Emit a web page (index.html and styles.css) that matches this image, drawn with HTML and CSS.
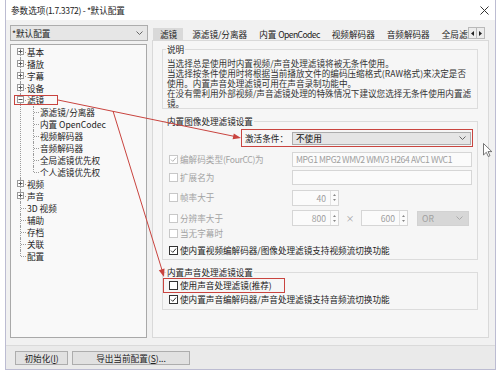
FILE: index.html
```html
<!DOCTYPE html>
<html lang="zh-CN">
<head>
<meta charset="utf-8">
<title>参数选项</title>
<link rel="stylesheet" href="styles.css">
</head>
<body>
<div class="window">
  <div class="titlebar">
    <span class="title">参数选项<span class="latin">(1.7.3372) - *</span>默认配置</span>
    <svg class="close" width="9" height="9" viewBox="0 0 9 9"><path d="M0.5 0.5L8.5 8.5M8.5 0.5L0.5 8.5" stroke="#333" stroke-width="1"/></svg>
  </div>
  <div class="client">
    <div class="main">
      <div class="sidebar">
        <div class="combo profile">
          <span>*默认配置</span>
          <svg class="chev" width="7" height="4" viewBox="0 0 7 4"><path d="M0.5 0.5L3.5 3.5L6.5 0.5" fill="none" stroke="#666"/></svg>
        </div>
        <div class="tree">
          <ul class="tree-list root">
            <li><div class="row"><svg class="exp" width="7" height="7" viewBox="0 0 7 7"><rect x="0.5" y="0.5" width="6" height="6" fill="#fff" stroke="#9a9a9a"/><path d="M1.5 3.5h4M3.5 1.5v4" stroke="#555"/></svg>基本</div></li>
            <li><div class="row"><svg class="exp" width="7" height="7" viewBox="0 0 7 7"><rect x="0.5" y="0.5" width="6" height="6" fill="#fff" stroke="#9a9a9a"/><path d="M1.5 3.5h4M3.5 1.5v4" stroke="#555"/></svg>播放</div></li>
            <li><div class="row"><svg class="exp" width="7" height="7" viewBox="0 0 7 7"><rect x="0.5" y="0.5" width="6" height="6" fill="#fff" stroke="#9a9a9a"/><path d="M1.5 3.5h4M3.5 1.5v4" stroke="#555"/></svg>字幕</div></li>
            <li><div class="row"><svg class="exp" width="7" height="7" viewBox="0 0 7 7"><rect x="0.5" y="0.5" width="6" height="6" fill="#fff" stroke="#9a9a9a"/><path d="M1.5 3.5h4M3.5 1.5v4" stroke="#555"/></svg>设备</div></li>
            <li><div class="row"><svg class="exp" width="7" height="7" viewBox="0 0 7 7"><rect x="0.5" y="0.5" width="6" height="6" fill="#fff" stroke="#9a9a9a"/><path d="M1.5 3.5h4" stroke="#555"/></svg>滤镜</div>
              <ul class="tree-list sub">
                <li><div class="row">源滤镜/分离器</div></li>
                <li><div class="row">内置 OpenCodec</div></li>
                <li><div class="row">视频解码器</div></li>
                <li><div class="row">音频解码器</div></li>
                <li><div class="row">全局滤镜优先权</div></li>
                <li><div class="row">个人滤镜优先权</div></li>
              </ul>
            </li>
            <li><div class="row"><svg class="exp" width="7" height="7" viewBox="0 0 7 7"><rect x="0.5" y="0.5" width="6" height="6" fill="#fff" stroke="#9a9a9a"/><path d="M1.5 3.5h4M3.5 1.5v4" stroke="#555"/></svg>视频</div></li>
            <li><div class="row"><svg class="exp" width="7" height="7" viewBox="0 0 7 7"><rect x="0.5" y="0.5" width="6" height="6" fill="#fff" stroke="#9a9a9a"/><path d="M1.5 3.5h4M3.5 1.5v4" stroke="#555"/></svg>声音</div></li>
            <li><div class="row">3D 视频</div></li>
            <li><div class="row">辅助</div></li>
            <li><div class="row">存档</div></li>
            <li><div class="row">关联</div></li>
            <li><div class="row">配置</div></li>
          </ul>
        </div>
      </div>
      <div class="tabs-area">
        <div class="tabstrip">
          <div class="tabs">
            <span class="tab active">滤镜</span>
            <span class="tab">源滤镜/分离器</span>
            <span class="tab">内置 <span class="latin">OpenCodec</span></span>
            <span class="tab">视频解码器</span>
            <span class="tab">音频解码器</span>
            <span class="tab">全局滤镜优先权</span>
          </div>
          <div class="tab-arrows">
            <span class="tab-arrow"><svg width="3" height="5" viewBox="0 0 3 5"><path d="M3 0L0 2.5L3 5Z" fill="#222"/></svg></span>
            <span class="tab-arrow"><svg width="3" height="5" viewBox="0 0 3 5"><path d="M0 0L3 2.5L0 5Z" fill="#222"/></svg></span>
          </div>
        </div>
        <div class="panel">
          <fieldset class="group">
            <legend>说明</legend>
            <div class="desc">
              <div>当选择总是使用时内置视频/声音处理滤镜将被无条件使用。</div>
              <div>当选择按条件使用时将根据当前播放文件的编码压缩格式(RAW格式)来决定是否</div>
              <div>使用。内置声音处理滤镜可用在声音录制功能中。</div>
              <div>在没有需利用外部视频/声音滤镜处理的特殊情况下建议您选择无条件使用内置滤</div>
              <div>镜。</div>
            </div>
          </fieldset>

          <fieldset class="group video">
            <legend>内置图像处理滤镜设置</legend>
            <div class="opt-row r1">
              <div class="cond-box">
                <span class="cond-label">激活条件：</span>
                <div class="combo cond-select">
                  <span>不使用</span>
                  <svg class="chev" width="7" height="4" viewBox="0 0 7 4"><path d="M0.5 0.5L3.5 3.5L6.5 0.5" fill="none" stroke="#666"/></svg>
                </div>
              </div>
            </div>
            <div class="opt-row r2">
              <div class="lab disabled"><span class="cb dis"><svg width="7" height="7" viewBox="0 0 7 7"><path d="M1 3.6L2.8 5.4L6 1.6" fill="none" stroke="#b5b5b5" stroke-width="1"/></svg></span><span class="lab-text">编解码类型<span class="latin">(FourCC)</span>为</span></div>
              <div class="field"><span class="latin">MPG1 MPG2 WMV2 WMV3 H264 AVC1 WVC1</span></div>
            </div>
            <div class="opt-row r3">
              <div class="lab disabled"><span class="cb dis"></span><span class="lab-text">扩展名为</span></div>
              <div class="field"></div>
            </div>
            <div class="opt-row r4">
              <div class="lab disabled"><span class="cb dis"></span><span class="lab-text">帧率大于</span></div>
              <div class="spin">
                <span class="spin-val">40</span>
                <span class="spin-btns">
                  <svg width="3" height="2" viewBox="0 0 3 2"><path d="M0 2L1.5 0L3 2Z" fill="#888"/></svg>
                  <svg width="3" height="2" viewBox="0 0 3 2"><path d="M0 0L1.5 2L3 0Z" fill="#888"/></svg>
                </span>
              </div>
            </div>
            <div class="opt-row r5">
              <div class="lab disabled"><span class="cb dis"></span><span class="lab-text">分辨率大于</span></div>
              <div class="spin">
                <span class="spin-val">800</span>
                <span class="spin-btns">
                  <svg width="3" height="2" viewBox="0 0 3 2"><path d="M0 2L1.5 0L3 2Z" fill="#888"/></svg>
                  <svg width="3" height="2" viewBox="0 0 3 2"><path d="M0 0L1.5 2L3 0Z" fill="#888"/></svg>
                </span>
              </div>
              <span class="times">×</span>
              <div class="spin">
                <span class="spin-val">600</span>
                <span class="spin-btns">
                  <svg width="3" height="2" viewBox="0 0 3 2"><path d="M0 2L1.5 0L3 2Z" fill="#888"/></svg>
                  <svg width="3" height="2" viewBox="0 0 3 2"><path d="M0 0L1.5 2L3 0Z" fill="#888"/></svg>
                </span>
              </div>
              <div class="combo or-select">
                <span>OR</span>
                <svg class="chev" width="7" height="4" viewBox="0 0 7 4"><path d="M0.5 0.5L3.5 3.5L6.5 0.5" fill="none" stroke="#aaa"/></svg>
              </div>
            </div>
            <div class="opt-row r6">
              <div class="lab disabled"><span class="cb dis"></span><span class="lab-text">当无字幕时</span></div>
            </div>
            <div class="opt-row r7">
              <div class="lab wide"><span class="cb"><svg width="7" height="7" viewBox="0 0 7 7"><path d="M1 3.6L2.8 5.4L6 1.6" fill="none" stroke="#333" stroke-width="1"/></svg></span><span class="lab-text">使内置视频编解码器/图像处理滤镜支持视频流切换功能</span></div>
            </div>
          </fieldset>

          <fieldset class="group audio">
            <legend>内置声音处理滤镜设置</legend>
            <div class="opt-row a1">
              <div class="audio-box"><span class="cb"></span><span class="lab-text">使用声音处理滤镜(推荐)</span></div>
            </div>
            <div class="opt-row a2">
              <div class="lab wide"><span class="cb"><svg width="7" height="7" viewBox="0 0 7 7"><path d="M1 3.6L2.8 5.4L6 1.6" fill="none" stroke="#333" stroke-width="1"/></svg></span><span class="lab-text">使内置声音编解码器/声音处理滤镜支持音频流切换功能</span></div>
            </div>
          </fieldset>
        </div>
      </div>
    </div>
    <div class="footer">
      <span class="btn btn-init">初始化(<u>I</u>)</span>
      <span class="btn btn-export">导出当前配置(<u>S</u>)...</span>
    </div>
  </div>
</div>

<svg class="annot" width="500" height="375" viewBox="0 0 500 375">
  <rect x="14.5" y="95.5" width="43" height="9" fill="none" stroke="#c9443f" stroke-width="1"/>
  <line x1="58" y1="100" x2="234" y2="136.3" stroke="#c9443f" stroke-width="1"/>
  <polygon points="241,138 232.6,139.3 233.8,133.5" fill="#c9443f"/>
  <line x1="113" y1="111" x2="162" y2="270" stroke="#c9443f" stroke-width="1"/>
  <polygon points="164,277 158.8,270.3 164.5,268.5" fill="#c9443f"/>
  <path d="M483.5 143.5L483.5 155L486.3 152.3L488.3 156.5L490 155.7L488 151.6L491.8 151.6Z" fill="#fff" stroke="#555" stroke-width="0.8" stroke-linejoin="round"/>
</svg>
</body>
</html>
```

FILE: styles.css
```css
body {
  margin: 0;
  background: #ffffff;
  font-family: "Noto Sans CJK SC", "Microsoft YaHei", sans-serif;
  font-size: 8.6px;
  line-height: 11px;
  color: #222;
  position: relative;
  width: 500px;
  height: 375px;
  overflow: hidden;
}

.latin { letter-spacing: -0.35px; }

.window {
  margin-left: 5px;
  width: 489px;
  height: 369px;
  border: 1px solid #bcbcd2;
  border-top: none;
  display: flex;
  flex-direction: column;
  background: #f1f1f1;
}

.titlebar {
  height: 20px;
  flex-shrink: 0;
  background: #ffffff;
  display: flex;
  align-items: center;
  justify-content: space-between;
  padding: 0 6px 0 5px;
}
.title { color: #222; }
.close { display: block; }

.client {
  flex: 1;
  display: flex;
  flex-direction: column;
}

.main {
  height: 325px;
  box-sizing: border-box;
  display: flex;
  padding: 5px 0 0 4px;
}

.sidebar {
  width: 138px;
  display: flex;
  flex-direction: column;
}

.combo {
  box-sizing: border-box;
  display: flex;
  align-items: center;
  justify-content: space-between;
  white-space: nowrap;
}
.chev { display: block; }

.profile {
  height: 16px;
  border: 1px solid #adadad;
  background: #e6e6e6;
  padding: 0 4px 0 1px;
}

.tree {
  margin-top: 3px;
  width: 137px;
  height: 294px;
  box-sizing: border-box;
  border: 1px solid #a9a9a9;
  background: #f9f9f9;
  padding-top: 1px;
  color: #222;
}

.tree-list {
  list-style: none;
  margin: 0;
  padding: 0;
}
.tree-list.root { margin-left: 5px; }
.tree-list.sub { margin-left: 13px; }

.tree-list li { position: relative; }
.tree-list li::before {
  content: "";
  position: absolute;
  left: 4px;
  top: 0;
  bottom: 0;
  border-left: 1px dotted #9c9c9c;
}
.tree-list li:last-child::before { bottom: auto; height: 6px; }
.tree-list.root > li:first-child::before { top: 6px; }

.row {
  position: relative;
  height: 12px;
  display: flex;
  align-items: center;
  padding-left: 11px;
  white-space: nowrap;
}
.row::after {
  content: "";
  position: absolute;
  left: 5px;
  top: 6px;
  width: 5px;
  border-top: 1px dotted #9c9c9c;
}
.exp {
  position: absolute;
  left: 1px;
  top: 2px;
  z-index: 1;
  display: block;
}

.tabs-area {
  margin-left: 4px;
  width: 337px;
  display: flex;
  flex-direction: column;
}

.tabstrip {
  height: 15px;
  display: flex;
  align-items: flex-end;
}
.tabs {
  flex: 1;
  min-width: 0;
  display: flex;
  overflow: hidden;
  padding-left: 1px;
}
.tab {
  flex-shrink: 0;
  height: 12px;
  line-height: 12px;
  padding: 0 6px;
  white-space: nowrap;
  color: #222;
}
.tab.active { background: #d9d9d9; padding: 0 6px 0 7px; margin-right: 3px; }
.tab .latin { letter-spacing: -0.6px; }

.tab-arrows {
  align-self: flex-start;
  margin-top: 2px;
  margin-right: 4px;
  display: flex;
}
.tab-arrow {
  width: 9px;
  height: 12px;
  box-sizing: border-box;
  border: 1px solid #b9b9b9;
  background: #ececec;
  display: flex;
  align-items: center;
  justify-content: center;
}
.tab-arrow + .tab-arrow { margin-left: -1px; }
.tab-arrow svg { display: block; }

.panel {
  height: 298px;
  box-sizing: border-box;
  border: 1px solid #d9d9d9;
  background: #f6f6f6;
  padding: 3px 10px 0 9px;
}

.group {
  margin: 0;
  min-width: 0;
  border: 1px solid #dcdcdc;
  padding: 0 4px;
}
.group legend {
  padding: 0 1px;
  margin-left: -1px;
  line-height: 11px;
  color: #222;
}
.group.video { margin-top: 7px; padding-bottom: 3px; }
.group.audio { margin-top: 7px; padding-bottom: 4px; }

.desc {
  padding-top: 3px;
  line-height: 10px;
  color: #333;
  white-space: nowrap;
}

.opt-row {
  display: flex;
  align-items: center;
  white-space: nowrap;
}
.r1 { height: 18px; margin-top: 2px; }
.r2 { height: 16px; margin-top: 4px; }
.r3 { height: 16px; margin-top: 2px; }
.r4 { height: 17px; margin-top: 4px; }
.r5 { height: 16px; margin-top: 4px; }
.r6 { height: 12px; margin-top: 1px; }
.r7 { height: 12px; margin-top: 5px; }
.a1 { height: 15px; }
.a2 { height: 12px; }

.cond-box {
  margin-left: 74px;
  width: 233px;
  height: 18px;
  box-sizing: border-box;
  border: 1px solid #c9443f;
  display: flex;
  align-items: center;
  padding-left: 3px;
}
.cond-label { width: 43px; flex-shrink: 0; color: #222; }
.cond-select {
  margin-left: 4px;
  width: 179px;
  height: 13px;
  border: 1px solid #adadad;
  background: #e5e5e5;
  padding: 0 4px 0 3px;
  color: #111;
}

.lab {
  width: 125px;
  flex-shrink: 0;
  display: flex;
  align-items: center;
}
.lab.wide { width: auto; }
.lab.disabled { color: #a3a3a3; }

.cb {
  width: 9px;
  height: 9px;
  box-sizing: border-box;
  border: 1px solid #333;
  background: #fff;
  margin-left: 2px;
  flex-shrink: 0;
  display: flex;
  align-items: center;
  justify-content: center;
}
.cb svg { display: block; }
.cb.dis { border-color: #c8c8c8; }
.lab-text { margin-left: 2px; }

.field {
  width: 180px;
  height: 15px;
  box-sizing: border-box;
  border: 1px solid #d6d6d6;
  background: #fbfbfb;
  color: #9e9e9e;
  padding-left: 3px;
  display: flex;
  align-items: center;
}
.field .latin { letter-spacing: -0.4px; }

.spin {
  width: 47px;
  height: 16px;
  box-sizing: border-box;
  border: 1px solid #d6d6d6;
  background: #fbfbfb;
  display: flex;
}
.spin-val {
  flex: 1;
  text-align: right;
  padding-right: 4px;
  line-height: 14px;
  color: #9e9e9e;
}
.spin-btns {
  width: 7px;
  border-left: 1px solid #e2e2e2;
  display: flex;
  flex-direction: column;
  align-items: center;
  justify-content: space-around;
  padding: 2px 0;
}
.spin-btns svg { display: block; }

.times {
  width: 22px;
  text-align: center;
  color: #a3a3a3;
}

.or-select {
  margin-left: 9px;
  width: 52px;
  height: 15px;
  border: 1px solid #d2d2d2;
  background: #d7d7d7;
  color: #a0a0a0;
  padding: 0 5px 0 4px;
}

.audio-box {
  margin-left: -4px;
  width: 122px;
  height: 15px;
  box-sizing: border-box;
  border: 1px solid #c9443f;
  display: flex;
  align-items: center;
  padding-left: 3px;
  color: #222;
}

.footer {
  flex: 1;
  border-top: 1px solid #dadada;
  background: #eaeaea;
  display: flex;
  align-items: flex-start;
  gap: 4px;
  padding: 5px 0 0 9px;
}
.btn {
  height: 14px;
  box-sizing: border-box;
  border: 1px solid #adadad;
  background: #e1e1e1;
  display: flex;
  align-items: center;
  justify-content: center;
  white-space: nowrap;
  color: #222;
}
.btn-init { width: 53px; }
.btn-export { width: 118px; }

.annot {
  position: absolute;
  left: 0;
  top: 0;
  pointer-events: none;
}
```
